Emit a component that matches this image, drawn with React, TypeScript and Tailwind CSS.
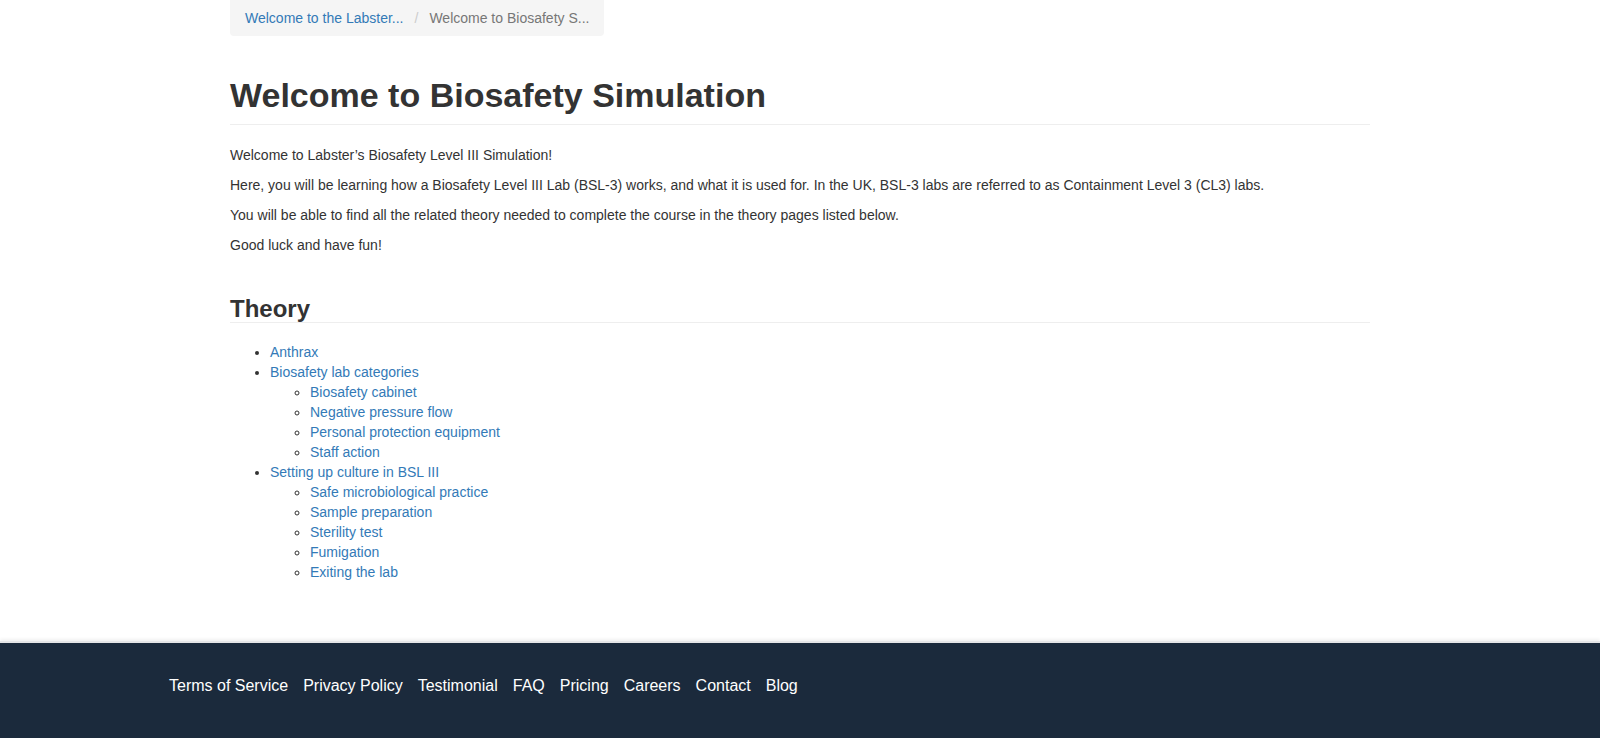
import React from 'react';

const linkCls = 'text-[#337ab7] hover:underline';

function Breadcrumb() {
  return (
    <ol className="inline-flex items-center h-[36px] px-[15px] bg-[#f5f5f5] rounded-b-[4px] text-[14px] leading-[20px]">
      <li>
        <a href="#" className={linkCls}>Welcome to the Labster...</a>
      </li>
      <li className="px-[11px] text-[#ccc]">/</li>
      <li className="text-[#777]">Welcome to Biosafety S...</li>
    </ol>
  );
}

export default function App() {
  const sections = [
    { title: 'Anthrax', children: [] as string[] },
    {
      title: 'Biosafety lab categories',
      children: ['Biosafety cabinet', 'Negative pressure flow', 'Personal protection equipment', 'Staff action'],
    },
    {
      title: 'Setting up culture in BSL III',
      children: ['Safe microbiological practice', 'Sample preparation', 'Sterility test', 'Fumigation', 'Exiting the lab'],
    },
  ];

  return (
    <div className="min-h-screen bg-white font-['Liberation_Sans',Arial,sans-serif] text-[#333] flex flex-col">
      <main className="w-[1140px] mx-auto">
        <Breadcrumb />

        {/* Page header */}
        <h1 className="mt-[41px] pb-[10px] border-b border-[#eee] text-[34px] leading-[37px] font-bold text-[#333]">
          Welcome to Biosafety Simulation
        </h1>

        <div className="mt-[20px] text-[14px] leading-[20px] text-[#333]">
          <p className="mb-[10px]">Welcome to Labster&rsquo;s Biosafety Level III Simulation!</p>
          <p className="mb-[10px]">
            Here, you will be learning how a Biosafety Level III Lab (BSL-3) works, and what it is used for. In the UK, BSL-3 labs are referred to as Containment Level 3 (CL3) labs.
          </p>
          <p className="mb-[10px]">You will be able to find all the related theory needed to complete the course in the theory pages listed below.</p>
          <p className="mb-[10px]">Good luck and have fun!</p>
        </div>

        {/* Theory */}
        <h2 className="mt-[41px] border-b border-[#eee] text-[24px] leading-[26px] font-bold text-[#333]">Theory</h2>

        <ul className="mt-[19px] pl-[40px] list-disc text-[14px] leading-[20px] marker:text-[#333]">
          {sections.map((s) => (
            <li key={s.title}>
              <a href="#" className={linkCls}>{s.title}</a>
              {s.children.length > 0 && (
                <ul className="pl-[40px] list-[circle]">
                  {s.children.map((c) => (
                    <li key={c}>
                      <a href="#" className={linkCls}>{c}</a>
                    </li>
                  ))}
                </ul>
              )}
            </li>
          ))}
        </ul>
      </main>

      <footer className="mt-[59px] border-t-2 border-[#e4e5e7] shadow-[0_-2px_3px_rgba(0,0,0,0.06)] bg-[#1b2a3c] flex-1 min-h-[96px]">
        <nav className="pl-[169px] pt-[32px] pb-[40px] flex gap-[15px] text-[16px] leading-[22px] text-white">
          {['Terms of Service', 'Privacy Policy', 'Testimonial', 'FAQ', 'Pricing', 'Careers', 'Contact', 'Blog'].map((l) => (
            <a key={l} href="#" className="hover:underline">{l}</a>
          ))}
        </nav>
      </footer>
    </div>
  );
}
